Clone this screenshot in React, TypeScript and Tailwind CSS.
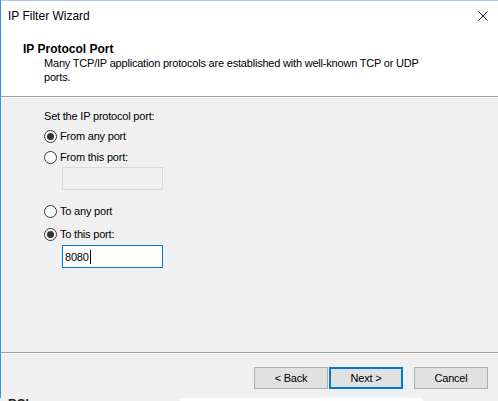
import React from "react";

function Radio({ checked, label }: { checked: boolean; label: string }) {
  return (
    <div className="flex h-[14px] items-center">
      <div className="flex h-[13px] w-[13px] items-center justify-center rounded-full border border-[#333333] bg-white">
        {checked && <div className="h-[7px] w-[7px] rounded-full bg-[#333333]" />}
      </div>
      <span className="ml-[3px] leading-[14px]">{label}</span>
    </div>
  );
}

export default function App() {
  return (
    <div
      className="flex h-[401px] w-[498px] flex-col overflow-hidden bg-[#f0f0f0] text-[11px] tracking-[-0.2px] text-black"
      style={{ fontFamily: '"Liberation Sans", Arial, sans-serif' }}
    >
      <div className="flex h-[398px] flex-col border-l border-t border-l-[#3b8fe0] border-t-[#a9c9ec]">
        {/* header */}
        <div className="flex h-[95px] flex-col bg-white">
          <div className="flex h-[30px] items-center justify-between pl-[7px] pr-[10px]">
            <span className="text-[12px] tracking-normal">IP Filter Wizard</span>
            <svg width="10" height="10" viewBox="0 0 10 10">
              <path d="M0.5 0.5 L9.5 9.5 M9.5 0.5 L0.5 9.5" stroke="#111" strokeWidth="1" />
            </svg>
          </div>
          <div className="mt-[11px] pl-[22px] text-[12px] font-bold leading-[14px] tracking-normal">
            IP Protocol Port
          </div>
          <div className="pl-[43px] leading-[14px]">
            Many TCP/IP application protocols are established with well-known TCP or UDP
            <br />
            ports.
          </div>
        </div>
        <div className="h-px bg-[#a0a0a0]" />
        <div className="h-px bg-white" />
        {/* body */}
        <div className="flex flex-1 flex-col pl-[43px]">
          <div className="mt-[11px] leading-[14px]">Set the IP protocol port:</div>
          <div className="mt-[6px]">
            <Radio checked label="From any port" />
          </div>
          <div className="mt-[7px]">
            <Radio checked={false} label="From this port:" />
          </div>
          <div className="ml-[18px] mt-[3px] h-[23px] w-[101px] border border-[#d9d9d9] bg-[#f0f0f0]" />
          <div className="mt-[14px]">
            <Radio checked={false} label="To any port" />
          </div>
          <div className="mt-[9px]">
            <Radio checked label="To this port:" />
          </div>
          <div className="ml-[18px] mt-[4px] flex h-[23px] w-[101px] items-center border border-[#0078d7] bg-white pl-[2px]">
            <span className="leading-[14px]">8080</span>
            <span className="ml-px h-[14px] w-px bg-black" />
          </div>
        </div>
        <div className="h-px bg-[#a0a0a0]" />
        <div className="h-px bg-white" />
        {/* footer */}
        <div className="flex h-[44px] items-start justify-end pr-[10px] pt-[13px]">
          <div className="flex h-[22px] w-[74px] items-center justify-center border border-[#adadad] bg-[#e1e1e1]">
            &lt; Back
          </div>
          <div className="ml-[1px] flex h-[22px] w-[74px] items-center justify-center border-2 border-[#0078d7] bg-[#e1e1e1]">
            Next &gt;
          </div>
          <div className="ml-[11px] flex h-[22px] w-[74px] items-center justify-center border border-[#adadad] bg-[#e1e1e1]">
            Cancel
          </div>
        </div>
      </div>
      <div className="flex h-[3px] overflow-hidden">
        <div className="w-[180px] overflow-hidden pl-[8px]">
          <div className="text-[12px] font-bold leading-[12px] text-[#222]">ROI</div>
        </div>
        <div className="w-[243px] bg-white" />
        <div className="flex-1" />
      </div>
    </div>
  );
}
